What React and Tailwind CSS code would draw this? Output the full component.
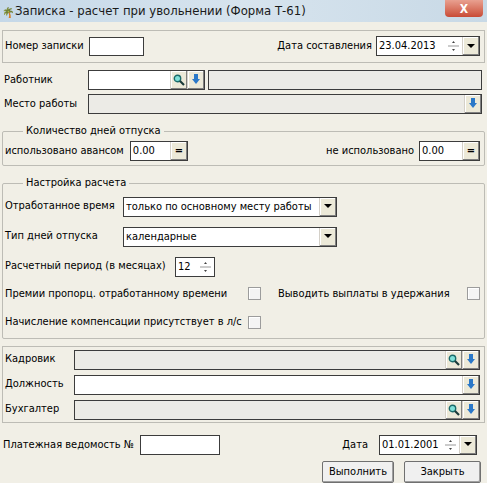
import React from "react";

const Mag = () => (
  <svg width="12" height="12" viewBox="0 0 12 12">
    <circle cx="4.5" cy="4.5" r="3.2" fill="#7fe0d8" stroke="#1a6a6a" strokeWidth="1.4" />
    <path d="M7 7 L11 11" stroke="#1a3a3a" strokeWidth="2.2" />
  </svg>
);
const Down = () => (
  <svg width="8" height="11" viewBox="0 0 8 11">
    <rect x="2" y="0" width="4" height="6" fill="#2a78c8" />
    <path d="M0 5 H8 L4 10 Z" fill="#2a78c8" />
  </svg>
);
const Btn = ({ children, w = "w-[17px]" }) => (
  <div className={`${w} h-full bg-[#ece9d8] border-l border-[#d4d0c8] flex items-center justify-center shadow-[inset_-1px_-1px_0_#808080,inset_1px_1px_0_#fff]`}>{children}</div>
);
const Field = ({ w, grey, children, btns }) => (
  <div className={`${w} h-[20px] border border-[#3c3c3c] ${grey ? "bg-[#ecebe6]" : "bg-white"} flex items-stretch`}>
    <div className="flex-1 pl-[2px] leading-[18px] whitespace-nowrap overflow-hidden">{children}</div>
    {btns}
  </div>
);
const Spin = () => (
  <div className="w-[17px] h-full flex items-center justify-center">
    <svg width="11" height="14" viewBox="0 0 11 14">
      <path d="M5.5 2 L7 4 H4 Z" fill="#444" />
      <path d="M0 7 H11" stroke="#999" strokeWidth="1" />
      <path d="M4 10 H7 L5.5 12 Z" fill="#444" />
    </svg>
  </div>
);
const Caret = () => (
  <Btn><svg width="8" height="5"><path d="M0 0H8L4 4Z" fill="#000" /></svg></Btn>
);
const Check = () => <div className="w-[13px] h-[13px] border border-[#9c9c9c] bg-[#f4f4f4] shadow-[inset_1px_1px_0_#fff]" />;
const Group = ({ title, children, cls }) => (
  <div className={`relative border border-[#bdbcb5] rounded-[2px] ${cls}`}>
    <span className="absolute -top-[8px] left-[20px] bg-[#f1efe6] px-[3px] leading-[14px]">{title}</span>
    {children}
  </div>
);

export default function App() {
  return (
    <div className="w-[487px] h-[483px] bg-[#f1efe6] text-[11px] text-black overflow-hidden flex flex-col" style={{ fontFamily: "Tahoma, 'DejaVu Sans Condensed', 'Liberation Sans', sans-serif" }}>
      <div className="h-[22px] bg-gradient-to-r from-[#c5d8e8] via-[#d7e4ee] to-[#c8d9e6] flex items-center pl-[2px] text-[13px] text-[#1a1a1a] relative">
        <span className="w-[10px] h-[12px] mr-[3px] text-[10px]">🌴</span>
        <span>Записка - расчет при увольнении (Форма Т-61)</span>
        <div className="absolute right-[4px] top-0 w-[38px] h-[17px] rounded-b-[4px] bg-gradient-to-b from-[#e8a090] to-[#c84a35] flex items-center justify-center text-white font-bold text-[12px]">X</div>
      </div>
      <div className="mx-[2px] mt-[8px] h-[33px] border border-[#bdbcb5] flex items-center pl-[2px] pr-[4px]">
        <span className="w-[84px]">Номер записки</span>
        <div className="w-[55px] h-[19px] border border-[#3c3c3c] bg-white" />
        <span className="ml-auto mr-[4px]">Дата составления</span>
        <Field w="w-[104px]" btns={<><Spin /><Caret /></>}>23.04.2013</Field>
      </div>
      <div className="flex items-center mt-[7px] pl-[4px] pr-[5px]">
        <span className="w-[84px]">Работник</span>
        <Field w="w-[117px]" btns={<><Btn><Mag /></Btn><Btn><Down /></Btn></>} />
        <div className="flex-1 ml-[3px] h-[20px] border border-[#3c3c3c] bg-[#ecebe6]" />
      </div>
      <div className="flex items-center mt-[4px] pl-[4px] pr-[5px]">
        <span className="w-[84px]">Место работы</span>
        <Field w="flex-1" grey btns={<Btn><Down /></Btn>} />
      </div>
      <Group title="Количество дней отпуска" cls="mx-[2px] mt-[17px] h-[35px] flex items-center pl-[2px] pr-[4px]">
        <span className="mr-[6px] mt-[6px]">использовано авансом</span>
        <div className="mt-[6px]"><Field w="w-[58px]" btns={<Btn><b>=</b></Btn>}>0.00</Field></div>
        <span className="ml-auto mr-[5px] mt-[6px]">не использовано</span>
        <div className="mt-[6px]"><Field w="w-[61px]" btns={<Btn><b>=</b></Btn>}>0.00</Field></div>
      </Group>
      <Group title="Настройка расчета" cls="mx-[2px] mt-[17px] h-[157px] flex flex-col pl-[2px] pr-[4px] pt-[13px]">
        <div className="flex items-center">
          <span className="w-[118px]">Отработанное время</span>
          <Field w="w-[214px]" btns={<Caret />}>только по основному месту работы</Field>
        </div>
        <div className="flex items-center mt-[10px]">
          <span className="w-[118px]">Тип дней отпуска</span>
          <Field w="w-[214px]" btns={<Caret />}>календарные</Field>
        </div>
        <div className="flex items-center mt-[10px]">
          <span className="w-[170px] whitespace-nowrap">Расчетный период (в месяцах)</span>
          <Field w="w-[40px]" btns={<Spin />}>12</Field>
        </div>
        <div className="flex items-center mt-[9px]">
          <span className="w-[243px]">Премии пропорц. отработанному времени</span>
          <Check />
          <span className="ml-[17px]">Выводить выплаты в удержания</span>
          <span className="ml-auto"><Check /></span>
        </div>
        <div className="flex items-center mt-[12px]">
          <span className="w-[243px]">Начисление компенсации присутствует в л/с</span>
          <Check />
        </div>
      </Group>
      <div className="mx-[2px] mt-[7px] h-[77px] border border-[#bdbcb5] flex flex-col justify-center gap-[5px] pl-[2px] pr-[4px]">
        {[
          ["Кадровик", true, true],
          ["Должность", false, false],
          ["Бухгалтер", true, true],
        ].map(([l, g, m]) => (
          <div key={l} className="flex items-center">
            <span className="w-[69px]">{l}</span>
            <Field w="flex-1" grey={g} btns={<>{m && <Btn><Mag /></Btn>}<Btn><Down /></Btn></>} />
          </div>
        ))}
      </div>
      <div className="flex items-center mt-[12px] pl-[3px] pr-[10px]">
        <span className="w-[137px]">Платежная ведомость №</span>
        <div className="w-[80px] h-[20px] border border-[#3c3c3c] bg-white" />
        <span className="ml-auto mr-[11px]">Дата</span>
        <Field w="w-[98px]" btns={<><Spin /><Caret /></>}>01.01.2001</Field>
      </div>
      <div className="flex justify-end gap-[10px] mt-[6px] pr-[6px]">
        {["Выполнить", "Закрыть"].map((t, i) => (
          <div key={t} className={`${i ? "w-[77px]" : "w-[72px]"} h-[22px] border border-[#707070] bg-[#f0f0f0] rounded-[2px] flex items-center justify-center shadow-[inset_-1px_-1px_0_#a0a0a0]`}>{t}</div>
        ))}
      </div>
    </div>
  );
}
